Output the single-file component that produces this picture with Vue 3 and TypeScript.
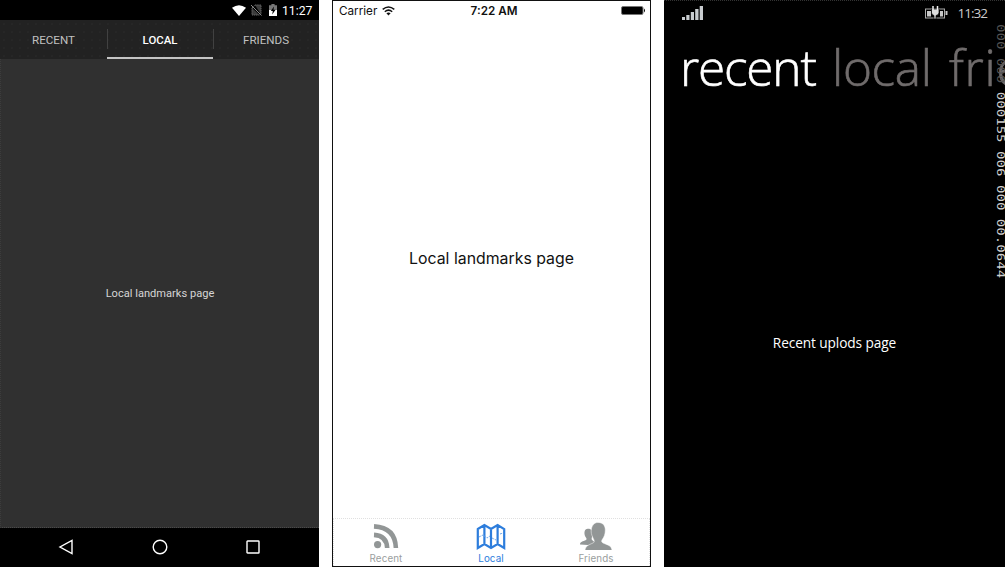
<script setup lang="ts">
interface Tab { label: string; active: boolean }
const androidTabs: Tab[] = [
  { label: 'RECENT', active: false },
  { label: 'LOCAL', active: true },
  { label: 'FRIENDS', active: false },
]
const counters: string[] = ['000 000', '000155 006 000 00.0644']
</script>

<template>
  <main class="stage">
    <section class="phone android">
      <header class="a-status">
        <svg class="a-wifi" viewBox="0 0 14 11"><path d="M0 2.8Q7-2.3 14 2.8L7 11Z" fill="#fff" /></svg>
        <svg class="a-nosim" viewBox="0 0 11 12">
          <path d="M4 1H10V10.5M1 4L4 1M1 4V11H8.5" fill="#3c3c3c" stroke="#666" stroke-dasharray="1.5 .7" />
          <path d="M0 1L10.5 11.5" stroke="#8a8a8a" />
        </svg>
        <svg class="a-batt" viewBox="0 0 8 12">
          <path d="M2.4 0H5.6V1.2H8V12H0V1.2H2.4Z" fill="#777" />
          <path d="M0 6H8V12H0Z" fill="#fff" />
          <path d="M5 2.5L1.8 7H3.8L3.2 10.5L6.6 5.7H4.5Z" fill="#000" />
        </svg>
        <span class="a-time">11:27</span>
      </header>
      <nav class="a-tabs">
        <div v-for="t in androidTabs" :key="t.label" class="a-tab" :class="{ active: t.active }">
          <span>{{ t.label }}</span>
        </div>
      </nav>
      <div class="a-body"><span>Local landmarks page</span></div>
      <footer class="a-nav">
        <svg viewBox="0 0 16 16"><path d="M14 1.5V14.5L2 8Z" /></svg>
        <svg viewBox="0 0 16 16"><circle cx="8" cy="8" r="6.8" /></svg>
        <svg viewBox="0 0 16 16"><rect x="2" y="2" width="12" height="12" rx=".6" /></svg>
      </footer>
    </section>

    <section class="phone ios">
      <header class="i-status">
        <div class="i-carrier">
          <span>Carrier</span>
          <svg viewBox="0 0 13 10">
            <path d="M.7 3.4Q6.5-1.4 12.3 3.4M2.8 5.7Q6.5 2.6 10.2 5.7" fill="none" stroke="#111" stroke-width="1.5" />
            <path d="M4.4 7.3Q6.5 5.7 8.6 7.3L6.5 9.6Z" fill="#111" />
          </svg>
        </div>
        <span class="i-time">7:22 AM</span>
        <svg class="i-batt" viewBox="0 0 25 10">
          <rect x=".5" y=".5" width="21.5" height="8" rx="1.5" fill="#000" stroke="#777" />
          <path d="M23 2.5Q25 4.5 23 6.5Z" fill="#000" />
        </svg>
      </header>
      <div class="i-body"><span>Local landmarks page</span></div>
      <footer class="i-tabs">
        <div class="i-tab">
          <svg viewBox="0 0 30 28">
            <circle cx="6.6" cy="22.6" r="3.6" fill="#929696" />
            <path d="M3 12.9Q15.6 13.5 16.2 26M3 4.4Q24.2 5.5 24.9 26" fill="none" stroke="#929696" stroke-width="4.6" />
          </svg>
          <span>Recent</span>
        </div>
        <div class="i-tab active">
          <svg viewBox="0 0 30 28">
            <path d="M1.8 7L8.4 3L15 7L21.6 3L28.2 7V26L21.6 22L15 26L8.4 22L1.8 26ZM8.4 3V22M15 7V26M21.6 3V22" fill="none" stroke="#2d7ddc" stroke-width="2.2" />
            <path d="M3 15L7 13L11 16L14 14M16 16L20 18M24 12L27 11" fill="none" stroke="#6ba5e8" stroke-dasharray="2 1" />
          </svg>
          <span>Local</span>
        </div>
        <div class="i-tab">
          <svg class="friends" viewBox="0 0 34 28">
            <path d="M1 22.5C1 19.8 4 19.5 7 18C8.5 17 7 16 6 14C5 11 5.2 7 8.8 6.8C12.6 6.7 14 9 13.5 12.5C13.3 15 12 17 13 18L17 21V23.5Z" fill="#929696" />
            <path d="M6 29C6 24 9.5 23 14 21C16 20 15.2 18.2 14 16C12.5 12.8 11.6 10 12.5 6.5C13.3 3 15.5.5 19 .5C23.8.5 26.3 3.5 26.3 8C26.3 12.5 25 15 23.4 17.3C22.1 19.3 22.5 20.2 24.5 21.2C28.5 23 33 23.5 33 29Z" fill="#929696" stroke="#fff" stroke-width=".5" />
          </svg>
          <span>Friends</span>
        </div>
      </footer>
    </section>

    <section class="phone windows">
      <header class="w-status">
        <svg class="w-signal" viewBox="0 0 22 14">
          <path d="M0 11H3V14H0ZM4.3 9H7.5V14H4.3ZM8.8 6H12V14H8.8ZM13.2 3H16.5V14H13.2ZM17.7 0H21V14H17.7Z" fill="#c8cccf" />
        </svg>
        <div class="w-right">
          <svg class="w-batt" viewBox="0 0 23 13">
            <rect x=".5" y="3" width="19" height="9" fill="none" stroke="#aaa" />
            <path d="M2 5H6V10.5H2ZM15 5H18V10.5H15ZM20.5 5H22.5V9H20.5Z" fill="#c8c8c8" />
            <path d="M6.5 3H14V7Q13 9.5 11 9.5V13H9V9.5Q7 9 6.5 7Z" fill="#ddd" stroke="#000" stroke-width=".7" />
            <path d="M8 0V4M12.5 0V4" stroke="#eee" stroke-width="1.5" />
          </svg>
          <span>11:32</span>
        </div>
      </header>
      <nav class="w-pivot"><span class="p-recent">recent</span><span class="p-local dim">local</span><span class="p-friends dim">friends</span></nav>
      <div class="w-body"><span>Recent uplods page</span></div>
      <div class="w-counter"><span class="faint">{{ counters[0] }}</span><span>&nbsp;{{ counters[1] }}</span></div>
    </section>
  </main>
</template>

<style>
body { margin: 0; background: #fff; overflow: hidden; }
</style>

<style scoped>
.stage { width: 1005px; height: 567px; display: grid; grid-template-columns: 319px 319px 341px; column-gap: 13px; background: #fff; overflow: hidden; }
.phone { display: flex; flex-direction: column; height: 567px; box-sizing: border-box; min-width: 0; overflow: hidden; }
svg { display: block; flex: none; }
span { white-space: nowrap; }

.android { background: #303030; font-family: Roboto, sans-serif; }
.a-status { height: 20px; box-sizing: border-box; background: #000; display: flex; align-items: center; justify-content: flex-end; padding-right: 7px; color: #fff; }
.a-wifi { width: 14px; height: 11px; margin-right: 5px; }
.a-nosim { width: 11px; height: 12px; margin-right: 7px; }
.a-batt { width: 8px; height: 12px; margin-right: 5px; }
.a-time { font-size: 12.2px; line-height: 20px; width: 30px; padding-top: 2px; }
.a-tabs { height: 39px; display: grid; grid-template-columns: 107px 106px 106px; background-color: #222; background-image: radial-gradient(circle, #2a2a2a 0.5px, transparent 0.9px); background-size: 8px 8px; }
.a-tab { display: flex; align-items: center; justify-content: center; box-sizing: border-box; color: #c0c0c0; font-size: 11.6px; position: relative; padding-top: 1px; }
.a-tab + .a-tab::before { content: ""; position: absolute; left: 0; top: 9px; height: 20px; width: 1px; background: #414141; }
.a-tab.active { color: #fff; font-weight: 500; font-size: 11.4px; border-bottom: 2px solid #c4c4c4; padding-top: 3px; }
.a-body { flex: 1; display: flex; align-items: center; justify-content: center; color: #d5d5d5; font-size: 11.1px; padding-top: 1px; border-left: 1px dotted #3c3c3c; border-bottom: 1px dotted #4a4a4a; }
.a-nav { height: 39px; background: #000; display: flex; align-items: center; justify-content: space-between; padding: 0 58px 1px; box-sizing: border-box; }
.a-nav svg { width: 16px; height: 16px; fill: none; stroke: #fff; stroke-width: 1.4; }

.ios { border: 1px solid #111; background: #fff; color: #111; font-family: Inter, sans-serif; }
.i-status { height: 19px; display: grid; grid-template-columns: 1fr auto 1fr; align-items: center; padding: 0 4px 0 6px; font-size: 11.7px; }
.i-carrier { display: flex; align-items: center; gap: 5px; }
.i-carrier svg { width: 13px; height: 10px; }
.i-time { font-weight: 600; font-size: 11.7px; padding-left: 3px; }
.i-batt { width: 25px; height: 10px; justify-self: end; }
.i-body { flex: 1; display: flex; align-items: center; justify-content: center; font-size: 15.85px; padding-bottom: 22px; }
.i-tabs { height: 48px; display: grid; grid-template-columns: repeat(3, 1fr); border: 1px dotted #e0e0e0; border-bottom: 0; box-sizing: border-box; }
.i-tab { display: flex; flex-direction: column; align-items: center; color: #9a9e9e; font-size: 9.8px; line-height: 12px; padding-top: 3px; padding-right: 1px; letter-spacing: .1px; }
.i-tab svg { width: 30px; height: 28px; margin-bottom: 3px; }
.i-tab .friends { width: 34px; }
.i-tab.active { color: #2d7ddc; }

.windows { background: #000; color: #fff; position: relative; font-family: "Open Sans", "Noto Sans", sans-serif; border-top: 1px dotted #333; }
.w-status { height: 27px; display: flex; align-items: center; justify-content: space-between; padding: 0 18px 4px 18px; box-sizing: border-box; color: #ccc; }
.w-signal { width: 22px; height: 14px; }
.w-right { display: flex; align-items: center; gap: 10px; font-size: 13.5px; line-height: 20px; letter-spacing: -1px; }
.w-batt { width: 23px; height: 13px; }
.w-pivot { height: 80px; display: flex; font-weight: 300; font-size: 49.5px; line-height: 79px; padding-left: 16px; white-space: nowrap; -webkit-text-stroke: .6px currentColor; }
.w-pivot span { flex: none; }
.p-recent { width: 152px; letter-spacing: -1.2px; }
.p-local { width: 117px; letter-spacing: -.3px; }
.p-friends { letter-spacing: .7px; }
.dim { color: #706c6c; }
.w-body { flex: 1; display: flex; align-items: center; justify-content: center; font-size: 13.7px; padding-top: 9px; letter-spacing: -.1px; }
.w-counter { position: absolute; right: 0; top: 23px; writing-mode: vertical-rl; font-family: "DejaVu Sans Mono", monospace; font-size: 11px; line-height: 10px; color: #d0d0d0; transform: scaleY(1.279); transform-origin: top; white-space: nowrap; }
.faint { color: #555; }
</style>
